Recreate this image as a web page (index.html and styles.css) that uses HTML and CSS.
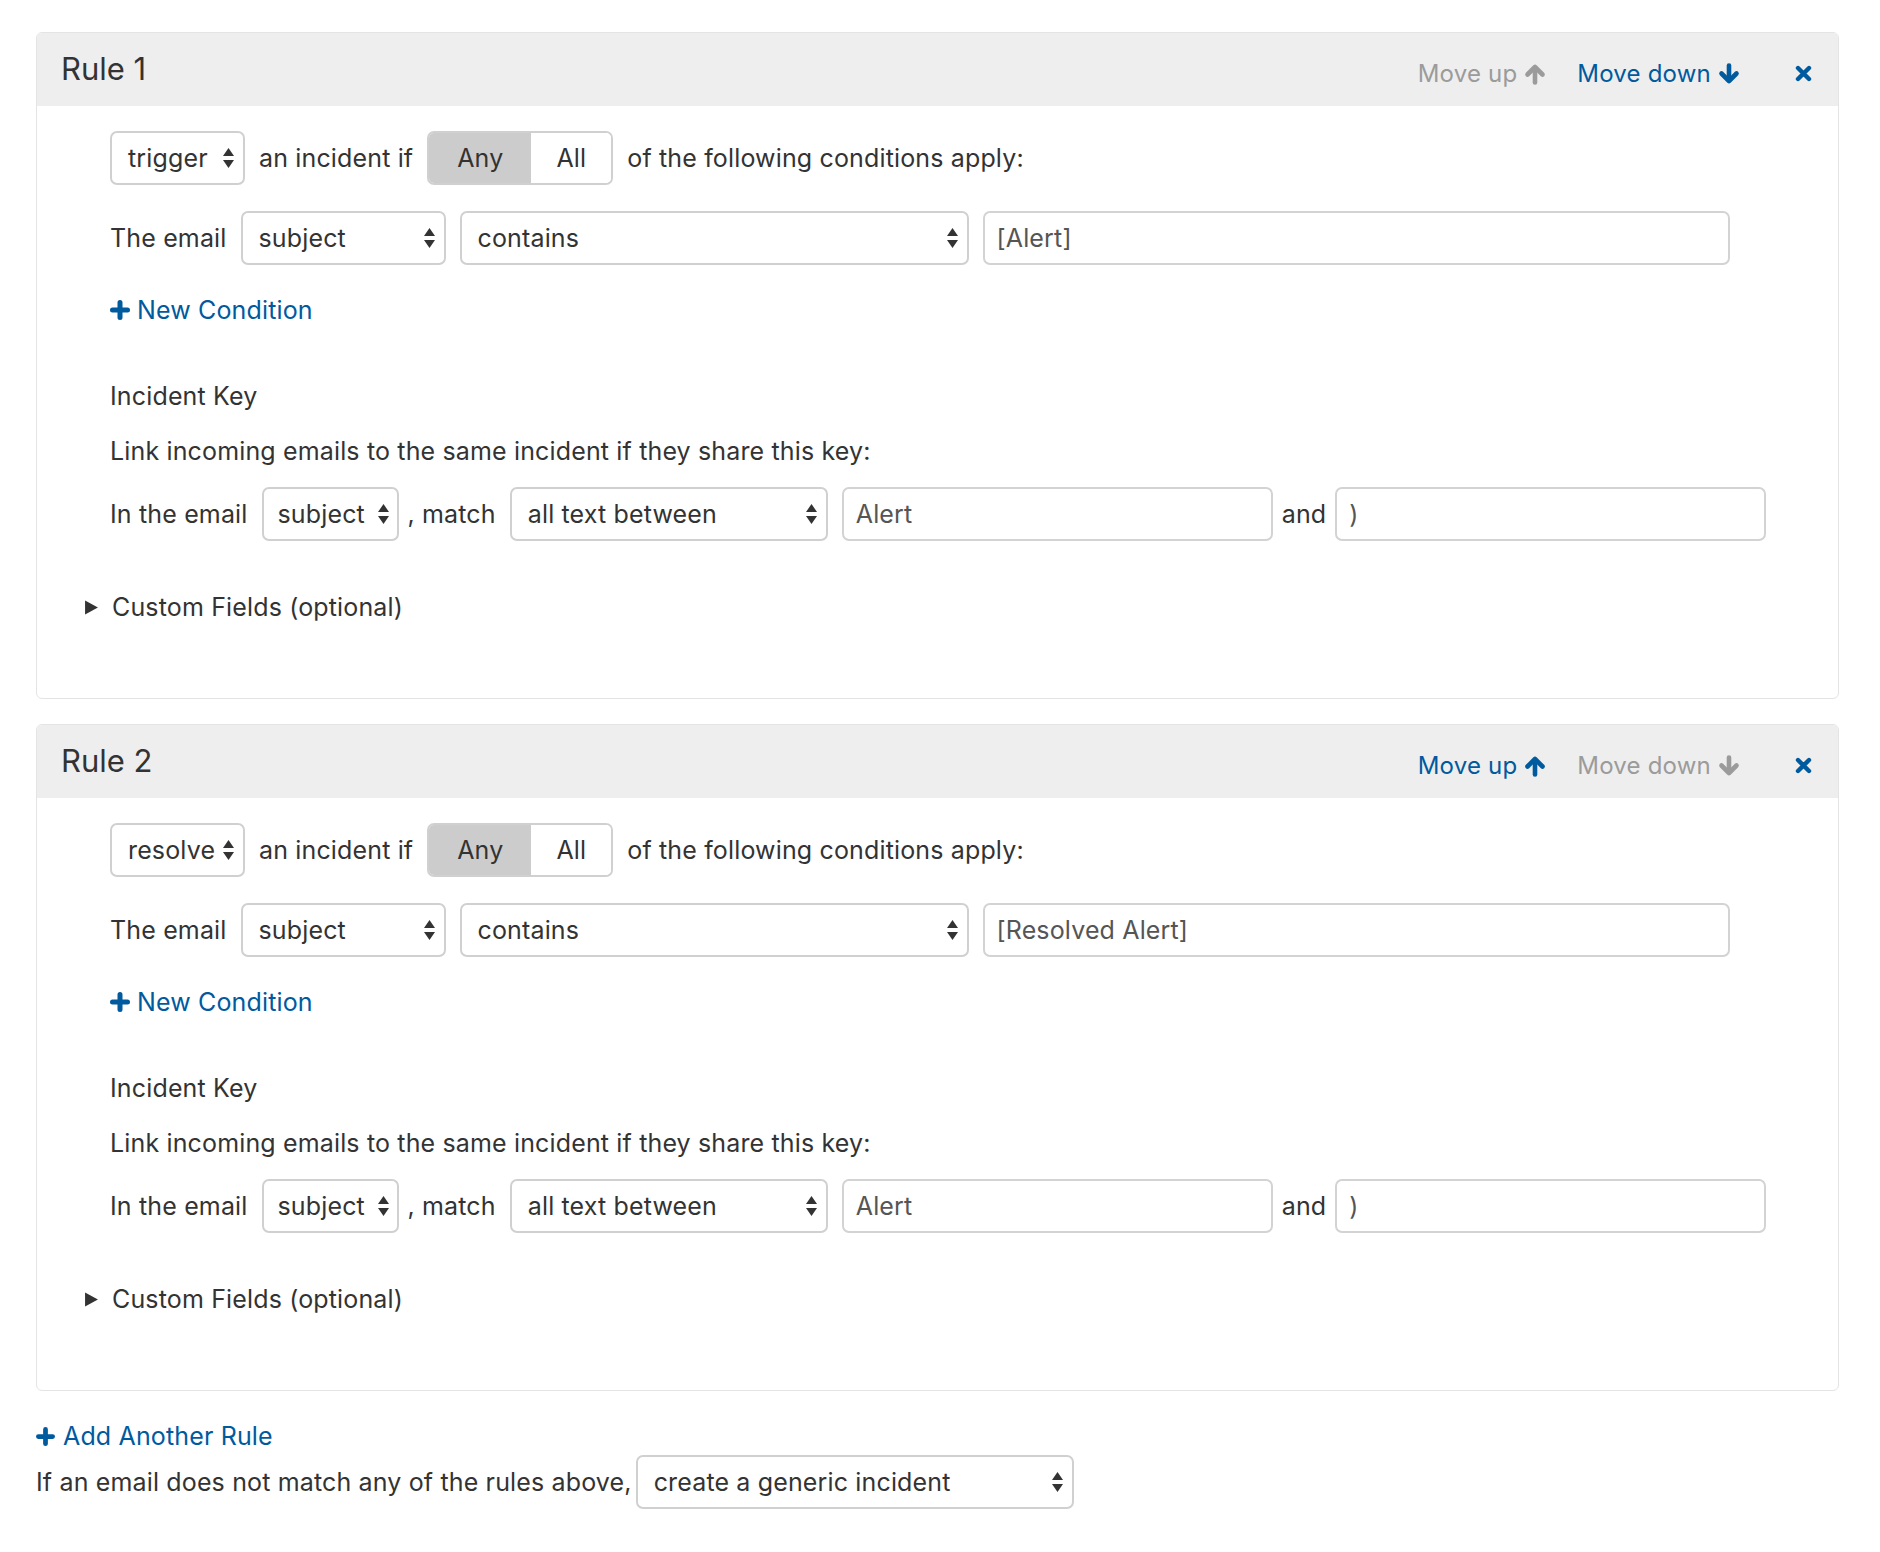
FILE: index.html
```html
<!DOCTYPE html>
<html lang="en">
<head>
<meta charset="utf-8">
<title>Email rules</title>
<link rel="stylesheet" href="styles.css">
</head>
<body>
<div class="page">

  <section class="rule">
    <header class="rule-head">
      <h2 class="rule-title">Rule 1</h2>
      <div class="actions">
        <span class="act is-disabled">Move up <svg class="arrow" viewBox="0 0 22 22"><path d="M11 19.5V6"/><path d="M3.5 11.5L11 4l7.5 7.5"/></svg></span>
        <a class="act" href="#">Move down <svg class="arrow" viewBox="0 0 22 22"><path d="M11 2.5V16"/><path d="M3.5 10.5L11 18l7.5-7.5"/></svg></a>
        <a class="close" href="#"><svg viewBox="0 0 17 17"><path d="M3 3l11 11M14 3L3 14"/></svg></a>
      </div>
    </header>
    <div class="rule-body">
      <div class="row">
        <div class="select w-type"><span>trigger</span><svg class="updown" viewBox="0 0 11 20"><path d="M5.5 0L11 8H0z"/><path d="M5.5 20L11 12H0z"/></svg></div>
        <span class="txt">an incident if</span>
        <div class="seg"><span class="seg-btn on">Any</span><span class="seg-btn">All</span></div>
        <span class="txt">of the following conditions apply:</span>
      </div>
      <div class="row">
        <span class="txt">The email</span>
        <div class="select w-field"><span>subject</span><svg class="updown" viewBox="0 0 11 20"><path d="M5.5 0L11 8H0z"/><path d="M5.5 20L11 12H0z"/></svg></div>
        <div class="select w-op"><span>contains</span><svg class="updown" viewBox="0 0 11 20"><path d="M5.5 0L11 8H0z"/><path d="M5.5 20L11 12H0z"/></svg></div>
        <div class="input w-value">[Alert]</div>
      </div>
      <a class="add" href="#"><svg class="plus" viewBox="0 0 20 20"><path d="M10 2.5v15M2.5 10h15"/></svg>New Condition</a>
      <div class="key-title">Incident Key</div>
      <div class="key-desc">Link incoming emails to the same incident if they share this key:</div>
      <div class="row">
        <span class="txt">In the email</span>
        <div class="select w-small"><span>subject</span><svg class="updown" viewBox="0 0 11 20"><path d="M5.5 0L11 8H0z"/><path d="M5.5 20L11 12H0z"/></svg></div>
        <span class="txt tight">, match</span>
        <div class="select w-match"><span>all text between</span><svg class="updown" viewBox="0 0 11 20"><path d="M5.5 0L11 8H0z"/><path d="M5.5 20L11 12H0z"/></svg></div>
        <div class="input w-key">Alert</div>
        <span class="txt tight">and</span>
        <div class="input w-key2 tight">)</div>
      </div>
      <div class="custom"><svg class="tri" viewBox="0 0 14 14"><path d="M1 0.5L13 7L1 13.5z"/></svg>Custom Fields (optional)</div>
    </div>
  </section>

  <section class="rule">
    <header class="rule-head">
      <h2 class="rule-title">Rule 2</h2>
      <div class="actions">
        <a class="act" href="#">Move up <svg class="arrow" viewBox="0 0 22 22"><path d="M11 19.5V6"/><path d="M3.5 11.5L11 4l7.5 7.5"/></svg></a>
        <span class="act is-disabled">Move down <svg class="arrow" viewBox="0 0 22 22"><path d="M11 2.5V16"/><path d="M3.5 10.5L11 18l7.5-7.5"/></svg></span>
        <a class="close" href="#"><svg viewBox="0 0 17 17"><path d="M3 3l11 11M14 3L3 14"/></svg></a>
      </div>
    </header>
    <div class="rule-body">
      <div class="row">
        <div class="select w-type"><span>resolve</span><svg class="updown" viewBox="0 0 11 20"><path d="M5.5 0L11 8H0z"/><path d="M5.5 20L11 12H0z"/></svg></div>
        <span class="txt">an incident if</span>
        <div class="seg"><span class="seg-btn on">Any</span><span class="seg-btn">All</span></div>
        <span class="txt">of the following conditions apply:</span>
      </div>
      <div class="row">
        <span class="txt">The email</span>
        <div class="select w-field"><span>subject</span><svg class="updown" viewBox="0 0 11 20"><path d="M5.5 0L11 8H0z"/><path d="M5.5 20L11 12H0z"/></svg></div>
        <div class="select w-op"><span>contains</span><svg class="updown" viewBox="0 0 11 20"><path d="M5.5 0L11 8H0z"/><path d="M5.5 20L11 12H0z"/></svg></div>
        <div class="input w-value">[Resolved Alert]</div>
      </div>
      <a class="add" href="#"><svg class="plus" viewBox="0 0 20 20"><path d="M10 2.5v15M2.5 10h15"/></svg>New Condition</a>
      <div class="key-title">Incident Key</div>
      <div class="key-desc">Link incoming emails to the same incident if they share this key:</div>
      <div class="row">
        <span class="txt">In the email</span>
        <div class="select w-small"><span>subject</span><svg class="updown" viewBox="0 0 11 20"><path d="M5.5 0L11 8H0z"/><path d="M5.5 20L11 12H0z"/></svg></div>
        <span class="txt tight">, match</span>
        <div class="select w-match"><span>all text between</span><svg class="updown" viewBox="0 0 11 20"><path d="M5.5 0L11 8H0z"/><path d="M5.5 20L11 12H0z"/></svg></div>
        <div class="input w-key">Alert</div>
        <span class="txt tight">and</span>
        <div class="input w-key2 tight">)</div>
      </div>
      <div class="custom"><svg class="tri" viewBox="0 0 14 14"><path d="M1 0.5L13 7L1 13.5z"/></svg>Custom Fields (optional)</div>
    </div>
  </section>

  <a class="add add-rule" href="#"><svg class="plus" viewBox="0 0 20 20"><path d="M10 2.5v15M2.5 10h15"/></svg>Add Another Rule</a>
  <div class="row fallback">
    <span class="txt">If an email does not match any of the rules above,</span>
    <div class="select w-fallback"><span>create a generic incident</span><svg class="updown" viewBox="0 0 11 20"><path d="M5.5 0L11 8H0z"/><path d="M5.5 20L11 12H0z"/></svg></div>
  </div>

</div>
</body>
</html>
```

FILE: styles.css
```css
* { box-sizing: border-box; }

html, body {
  margin: 0;
  padding: 0;
  background: #ffffff;
}

body {
  font-family: Inter, "Noto Sans", sans-serif;
  font-size: 25px;
  letter-spacing: 0.15px;
  line-height: 30px;
  color: #333333;
}

a { text-decoration: none; color: #005a9e; }

.page {
  padding: 32px 0 0 36px;
  width: 1839px;
}

.rule {
  border: 1px solid #e4e4e4;
  border-radius: 6px;
  overflow: hidden;
  margin-bottom: 25px;
}

.rule-head {
  height: 73px;
  background: #eeeeee;
  display: flex;
  align-items: center;
  justify-content: space-between;
  padding: 0 26px 0 24px;
}

.rule-title {
  margin: 0;
  font-size: 31px;
  font-weight: 400;
  line-height: 36px;
  letter-spacing: 0;
  color: #333333;
  position: relative;
  top: -1px;
}

.actions {
  display: flex;
  align-items: center;
  padding-top: 8px;
}

.act {
  display: inline-flex;
  align-items: center;
  gap: 7px;
  color: #005a9e;
  margin-right: 31px;
  font-size: 24px;
  letter-spacing: 0.2px;
}

.act.is-disabled { color: #9b9b9b; }

.arrow {
  width: 22px;
  height: 22px;
  fill: none;
  stroke: currentColor;
  stroke-width: 4.6;
  stroke-linecap: round;
  stroke-linejoin: round;
}

.close {
  display: inline-flex;
  margin-left: 24px;
  color: #005a9e;
}

.close svg {
  width: 17px;
  height: 17px;
  fill: none;
  stroke: currentColor;
  stroke-width: 4.4;
  stroke-linecap: round;
}

.rule-body {
  padding: 25px 0 76px 73px;
}

.row {
  display: flex;
  align-items: center;
  gap: 14px;
  height: 54px;
}

.row + .row { margin-top: 26px; }

.txt { white-space: nowrap; }

.tight { margin-left: -5px; }

.select,
.input {
  height: 54px;
  border: 2px solid #d0d0d0;
  border-radius: 7px;
  background: #ffffff;
  display: flex;
  align-items: center;
  white-space: nowrap;
}

.select {
  justify-content: space-between;
  padding: 0 9px 0 16px;
  color: #333333;
}

.input {
  padding: 0 12px;
  color: #555555;
  border-color: #d3d3d3;
}

.updown {
  width: 11px;
  height: 20px;
  fill: #333333;
  flex: none;
}

.w-type { width: 135px; }
.w-field { width: 205px; }
.w-op { width: 509px; }
.w-value { width: 747px; }
.w-small { width: 137px; padding-left: 14px; padding-right: 8px; }
.w-match { width: 318px; }
.w-key { width: 431px; }
.w-key2 { width: 431px; }
.w-fallback { width: 438px; }

.seg {
  display: flex;
  height: 54px;
  border: 2px solid #d0d0d0;
  border-radius: 7px;
  overflow: hidden;
}

.seg-btn {
  display: flex;
  align-items: center;
  justify-content: center;
  height: 100%;
  width: 80px;
  background: #ffffff;
}

.seg-btn.on {
  width: 102px;
  background: #cccccc;
}

.add {
  display: flex;
  align-items: center;
  gap: 7px;
  margin-top: 30px;
  width: max-content;
  color: #005a9e;
}

.plus {
  width: 20px;
  height: 20px;
  fill: none;
  stroke: currentColor;
  stroke-width: 5;
  stroke-linecap: round;
}

.key-title { margin-top: 56px; }

.key-desc { margin-top: 25px; }

.key-desc + .row { margin-top: 21px; }

.custom {
  display: flex;
  align-items: center;
  gap: 13px;
  margin-top: 51px;
  margin-left: -26px;
}

.tri {
  width: 15px;
  height: 15px;
  fill: #333333;
}

.add-rule {
  margin-top: 30px;
  gap: 8px;
}

.add-rule .plus { width: 19px; height: 19px; }

.fallback {
  margin-top: 4px;
  gap: 4px;
}
```
